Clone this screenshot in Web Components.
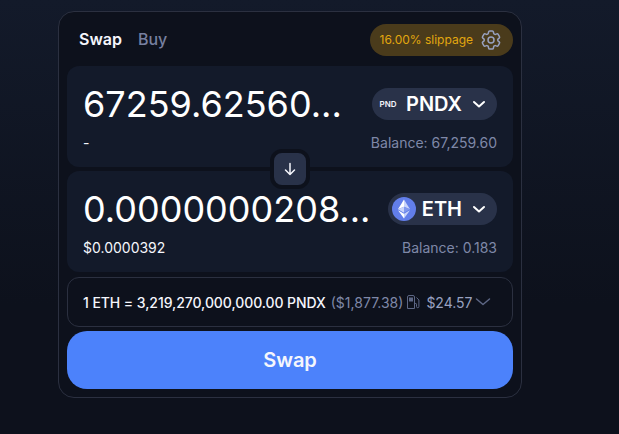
<!DOCTYPE html>
<html>
<head>
<meta charset="utf-8">
<style>
    html, body { margin: 0; height: 100%; }
    body {
        background: linear-gradient(#131a2a, #0d111c 70%);
        font-family: Inter, "Liberation Sans", sans-serif;
        color: #fff;
        overflow: hidden;
    }
</style>
</head>
<body>
<swap-card>
    <swap-header slot="header"></swap-header>
    <token-panel amount="67259.62560..." usd="-" balance="Balance: 67,259.60">
        <token-pill symbol="PNDX" logo="pnd" slot="pill"></token-pill>
    </token-panel>
    <flip-button></flip-button>
    <token-panel amount="0.0000000208..." usd="$0.0000392" balance="Balance: 0.183">
        <token-pill symbol="ETH" logo="eth" slot="pill"></token-pill>
    </token-panel>
    <rate-row></rate-row>
    <swap-button>Swap</swap-button>
</swap-card>

<script>
    const chevron = `<svg width="14" height="14" viewBox="0 0 14 14" fill="none" stroke="currentColor" stroke-width="2" stroke-linecap="round" stroke-linejoin="round"><path d="M2 5l5 4.500L12 5"/></svg>`;

    // Outer card: holds the header and the stacked rows
    class SwapCard extends HTMLElement {
        constructor() {
            super();
            this.attachShadow({ mode: 'open' });
            this.shadowRoot.innerHTML = `
                <style>
                    :host {
                        display: block;
                        width: 464px;
                        box-sizing: border-box;
                        margin: 11px 0 0 58px;
                        padding: 0 8px 8px;
                        background: #0d111c;
                        border: 1px solid #2b3040;
                        border-radius: 16px;
                    }
                    .stack { display: flex; flex-direction: column; position: relative; }
                </style>
                <slot name="header"></slot>
                <div class="stack"><slot></slot></div>
            `;
        }
    }

    class SwapHeader extends HTMLElement {
        constructor() {
            super();
            this.attachShadow({ mode: 'open' });
            this.shadowRoot.innerHTML = `
                <style>
                    :host {
                        display: flex;
                        align-items: center;
                        justify-content: space-between;
                        height: 54px;
                        padding: 0 0 0 12px;
                    }
                    .tabs { display: flex; gap: 16px; font-size: 16px; line-height: 20px; font-weight: 600; margin-top: -1px; }
                    .active { color: #f5f6fc; }
                    .idle { color: #7780a0; font-weight: 500; }
                    .slippage {
                        display: flex;
                        align-items: center;
                        gap: 6px;
                        height: 32px;
                        margin-top: 1px;
                        padding: 0 10px 0 10px;
                        border-radius: 16px;
                        background: #4a3b1b;
                        color: #e2a70f;
                        font-size: 12px;
                    }
                    svg { color: #98a1c0; display: block; }
                </style>
                <div class="tabs"><span class="active">Swap</span><span class="idle">Buy</span></div>
                <div class="slippage">
                    <span>16.00% slippage</span>
                    <svg width="24" height="24" viewBox="0 0 24 24" fill="none" stroke="currentColor" stroke-width="1.5" stroke-linecap="round" stroke-linejoin="round">
                        <path d="M9.594 3.94c.09-.542.56-.94 1.11-.94h2.593c.55 0 1.02.398 1.11.94l.213 1.281c.063.374.313.686.645.87.074.04.147.083.22.127.325.196.72.257 1.075.124l1.217-.456a1.125 1.125 0 0 1 1.37.49l1.296 2.247a1.125 1.125 0 0 1-.26 1.431l-1.003.827c-.293.241-.438.613-.43.992a7.723 7.723 0 0 1 0 .255c-.008.378.137.75.43.991l1.004.827c.424.35.534.955.26 1.43l-1.298 2.247a1.125 1.125 0 0 1-1.369.491l-1.217-.456c-.355-.133-.75-.072-1.076.124a6.47 6.47 0 0 1-.22.128c-.331.183-.581.495-.644.869l-.213 1.281c-.09.543-.56.94-1.11.94h-2.594c-.55 0-1.019-.398-1.11-.94l-.213-1.281c-.062-.374-.312-.686-.644-.87a6.52 6.52 0 0 1-.22-.127c-.325-.196-.72-.257-1.076-.124l-1.217.456a1.125 1.125 0 0 1-1.369-.49l-1.297-2.247a1.125 1.125 0 0 1 .26-1.431l1.004-.827c.292-.24.437-.613.43-.991a6.932 6.932 0 0 1 0-.255c.007-.38-.138-.751-.43-.992l-1.004-.827a1.125 1.125 0 0 1-.26-1.43l1.297-2.247a1.125 1.125 0 0 1 1.37-.491l1.216.456c.356.133.751.072 1.076-.124.072-.044.146-.086.22-.128.332-.183.582-.495.644-.869l.214-1.28Z"/>
                        <circle cx="12" cy="12" r="3"/>
                    </svg>
                </div>
            `;
        }
    }

    class TokenPanel extends HTMLElement {
        constructor() {
            super();
            this.attachShadow({ mode: 'open' });
        }

        connectedCallback() {
            const amount = this.getAttribute('amount') || '';
            const usd = this.getAttribute('usd') || '';
            const balance = this.getAttribute('balance') || '';
            this.shadowRoot.innerHTML = `
                <style>
                    :host {
                        display: block;
                        height: 101px;
                        box-sizing: border-box;
                        padding: 16px 16px 0;
                        background: #131a2a;
                        border-radius: 12px;
                    }
                    :host(:not(:first-of-type)) { margin-top: 4px; }
                    .top { display: flex; align-items: center; justify-content: space-between; gap: 12px; height: 44px; }
                    .amount {
                        font-size: 36px;
                        line-height: 44px;
                        white-space: nowrap;
                        color: #fff;
                    }
                    .bottom {
                        display: flex;
                        justify-content: space-between;
                        margin-top: 7px;
                        font-size: 14px;
                        line-height: 20px;
                    }
                    .usd { color: #f5f6fc; }
                    .balance { color: #7f88a8; }
                </style>
                <div class="top">
                    <div class="amount">${amount}</div>
                    <slot name="pill"></slot>
                </div>
                <div class="bottom">
                    <span class="usd">${usd}</span>
                    <span class="balance">${balance}</span>
                </div>
            `;
        }
    }

    class TokenPill extends HTMLElement {
        constructor() {
            super();
            this.attachShadow({ mode: 'open' });
        }

        connectedCallback() {
            const symbol = this.getAttribute('symbol') || '';
            const logo = this.getAttribute('logo') === 'eth'
                ? `<svg width="24" height="24" viewBox="0 0 24 24">
                       <circle cx="12" cy="12" r="12" fill="#627eea"/>
                       <path d="M12 2.500v7.300l6 2.500z" fill="#c9d4fa"/>
                       <path d="M12 2.500L6 12.300l6-2.500z" fill="#fff"/>
                       <path d="M12 16.800v4.700l6-8.200z" fill="#c9d4fa"/>
                       <path d="M12 21.500v-4.700L6 13.300z" fill="#fff"/>
                       <path d="M12 15.800l6-3.500-6-2.500z" fill="#8198ee"/>
                       <path d="M6 12.300l6 3.500V9.800z" fill="#c9d4fa"/>
                   </svg>`
                : `<span class="mark">PND</span>`;
            this.shadowRoot.innerHTML = `
                <style>
                    :host {
                        display: flex;
                        align-items: center;
                        flex: none;
                        height: 32px;
                        box-sizing: border-box;
                        padding: 0 11px 0 4px;
                        background: #293249;
                        border-radius: 16px;
                        color: #fff;
                    }
                    .mark {
                        width: 24px;
                        font-size: 8px;
                        font-weight: 600;
                        text-align: center;
                        color: #f5f6fc;
                    }
                    svg { display: block; flex: none; }
                    .symbol { font-size: 20px; font-weight: 600; margin: 0 10px 0 6px; line-height: 24px; }
                </style>
                ${logo}
                <span class="symbol">${symbol}</span>
                ${chevron}
            `;
        }
    }

    // Sits over the seam between the two panels
    class FlipButton extends HTMLElement {
        constructor() {
            super();
            this.attachShadow({ mode: 'open' });
            this.shadowRoot.innerHTML = `
                <style>
                    :host {
                        position: absolute;
                        left: 203px;
                        top: 83px;
                        width: 32px;
                        height: 32px;
                        display: flex;
                        align-items: center;
                        justify-content: center;
                        background: #293249;
                        border: 4px solid #0d111c;
                        border-radius: 12px;
                        color: #f5f6fc;
                    }
                    svg { display: block; }
                </style>
                <svg width="16" height="16" viewBox="0 0 16 16" fill="none" stroke="currentColor" stroke-width="1.500" stroke-linecap="round" stroke-linejoin="round">
                    <path d="M8 2.500v11M3.500 9L8 13.500 12.500 9"/>
                </svg>
            `;
        }
    }

    class RateRow extends HTMLElement {
        constructor() {
            super();
            this.attachShadow({ mode: 'open' });
            this.shadowRoot.innerHTML = `
                <style>
                    :host {
                        display: flex;
                        align-items: center;
                        height: 50px;
                        box-sizing: border-box;
                        margin-top: 5px;
                        padding: 0 20px 0 15px;
                        border: 1px solid #2b3040;
                        border-radius: 12px;
                        font-size: 14px;
                        white-space: nowrap;
                    }
                    .rate { color: #f5f6fc; font-weight: 500; letter-spacing: -0.07px; }
                    .fiat { color: #7f88a8; margin-left: 5px; }
                    .gas { color: #5d6785; margin-left: 4px; display: flex; align-items: center; gap: 6px; }
                    .price { color: #98a1c0; }
                    svg { display: block; flex: none; }
                    .chev { color: #5d6785; margin-left: auto; margin-right: 1px; }
                </style>
                <span class="rate">1 ETH = 3,219,270,000,000.00 PNDX</span>
                <span class="fiat">($1,877.38)</span>
                <span class="gas">
                    <svg width="13" height="14" viewBox="0 0 13 14" fill="none" stroke="currentColor" stroke-width="1">
                        <path d="M.5 13.500V2a1.500 1.500 0 0 1 1.500-1.500h4A1.500 1.500 0 0 1 7.500 2v11.500z"/>
                        <rect x="2" y="2.500" width="4" height="4" fill="currentColor" stroke="none"/>
                        <path d="M7.500 8.500h1.300a.7.7 0 0 1 .7.7v2.300a1.200 1.200 0 0 0 2.400 0V5L9.500 2.500"/>
                    </svg>
                    <span class="price">$24.57</span>
                </span>
                <svg class="chev" width="16" height="16" viewBox="0 0 16 16" fill="none" stroke="currentColor" stroke-width="1.500" stroke-linecap="round" stroke-linejoin="round">
                    <path d="M1.500 5L8 10.500 14.500 5"/>
                </svg>
            `;
        }
    }

    class SwapButton extends HTMLElement {
        constructor() {
            super();
            this.attachShadow({ mode: 'open' });
            this.shadowRoot.innerHTML = `
                <style>
                    :host {
                        display: flex;
                        align-items: center;
                        justify-content: center;
                        height: 58px;
                        margin-top: 4px;
                        background: #4c82fb;
                        border-radius: 20px;
                        color: #f5f6fc;
                        font-size: 20px;
                        font-weight: 600;
                    }
                </style>
                <slot></slot>
            `;
        }
    }

    customElements.define('swap-card', SwapCard);
    customElements.define('swap-header', SwapHeader);
    customElements.define('token-panel', TokenPanel);
    customElements.define('token-pill', TokenPill);
    customElements.define('flip-button', FlipButton);
    customElements.define('rate-row', RateRow);
    customElements.define('swap-button', SwapButton);
</script>
</body>
</html>
